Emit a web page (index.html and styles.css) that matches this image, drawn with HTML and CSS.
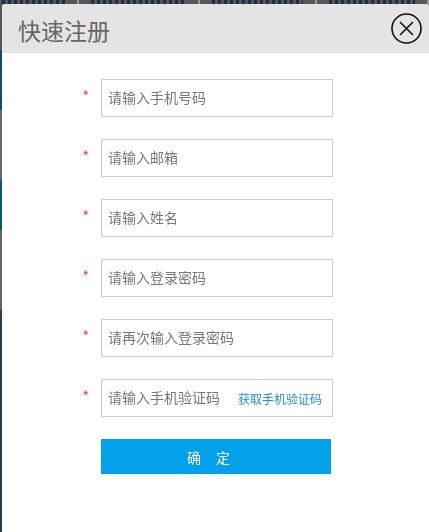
FILE: index.html
```html
<!DOCTYPE html>
<html lang="zh-CN">
<head>
  <meta charset="UTF-8" />
  <title>快速注册</title>
  <link rel="stylesheet" href="styles.css">
</head>
<body>

<div class="page">
  <div class="site-nav">
    <span class="nav-item w1"></span><span class="nav-sep"></span>
    <span class="nav-item w2"></span><span class="nav-sep"></span>
    <span class="nav-item w3"></span><span class="nav-sep"></span>
    <span class="nav-item w4"></span><span class="nav-sep"></span>
  </div>
</div>

<div class="dialog">
  <div class="dialog-head">
    <h2>快速注册</h2>
    <button class="close-btn" title="关闭">
      <svg width="31" height="31" viewBox="0 0 31 31">
        <circle cx="15.5" cy="15.5" r="14.5" fill="none" stroke="#111" stroke-width="1.6"/>
        <path d="M9 9 L22 22 M22 9 L9 22" stroke="#111" stroke-width="1.6" fill="none"/>
      </svg>
    </button>
  </div>

  <form class="reg-form" onsubmit="return false">
    <div class="form-row">
      <span class="req">*</span>
      <input type="text" class="field" placeholder="请输入手机号码">
    </div>
    <div class="form-row">
      <span class="req">*</span>
      <input type="text" class="field" placeholder="请输入邮箱">
    </div>
    <div class="form-row">
      <span class="req">*</span>
      <input type="text" class="field" placeholder="请输入姓名">
    </div>
    <div class="form-row">
      <span class="req">*</span>
      <input type="password" class="field" placeholder="请输入登录密码">
    </div>
    <div class="form-row">
      <span class="req">*</span>
      <input type="password" class="field" placeholder="请再次输入登录密码">
    </div>
    <div class="form-row">
      <span class="req">*</span>
      <div class="field code-box">
        <input type="text" placeholder="请输入手机验证码">
        <a href="#" class="get-code">获取手机验证码</a>
      </div>
    </div>
    <button type="submit" class="submit-btn">确定</button>
  </form>
</div>

</body>
</html>
```

FILE: styles.css
```css
html, body {
  height: 100%;
}

body {
  margin: 0;
  font-family: "Liberation Sans", "Noto Sans CJK SC", sans-serif;
  background: #4b535e;
  overflow: hidden;
}

/* page behind the dialog, dimmed */
.page {
  height: 100%;
  background: linear-gradient(to bottom, #575757 0, #575757 50px, #0d4b78 50px, #0d4b78 110px, #6a6a6a 110px, #6a6a6a 180px, #0b567a 180px, #0b567a 230px, #666 230px, #666 310px, #2e3d52 310px);
}

.site-nav {
  display: flex;
  align-items: flex-start;
  gap: 12px;
  padding-left: 2px;
  height: 6px;
  overflow: hidden;
}

.nav-item {
  height: 4px;
  background: repeating-linear-gradient(to right, #1b2c4a 0, #1b2c4a 3px, transparent 3px, transparent 6px);
}

.w1 { width: 66px; }
.w2 { width: 100px; }
.w3 { width: 96px; }
.w4 { width: 90px; }

.nav-sep {
  width: 2px;
  height: 4px;
  background: #9a9a9a;
}

/* dialog */
.dialog {
  position: fixed;
  left: 2px;
  top: 4px;
  right: 0;
  bottom: 0;
  background: #fff;
  border-radius: 3px 3px 0 0;
  overflow: hidden;
}

.dialog-head {
  height: 49px;
  background: #e4e4e4;
  display: flex;
  align-items: center;
  justify-content: space-between;
  padding: 0 7px 0 16px;
}

.dialog-head h2 {
  margin: 0;
  padding-top: 2px;
  font-size: 23px;
  font-weight: normal;
  color: #666;
}

.close-btn {
  border: none;
  background: none;
  padding: 0;
  width: 31px;
  height: 31px;
  cursor: pointer;
  display: block;
}

.close-btn svg {
  display: block;
}

.reg-form {
  padding: 26px 0 0 81px;
  display: flex;
  flex-direction: column;
  gap: 22px;
}

.form-row {
  display: flex;
  align-items: flex-start;
}

.req {
  width: 18px;
  padding-top: 9px;
  font-size: 14px;
  line-height: 14px;
  color: #f23030;
}

.field {
  width: 232px;
  height: 38px;
  box-sizing: border-box;
  border: 1px solid #ccc;
  padding: 0 6px;
  font-family: inherit;
  font-size: 14px;
  color: #333;
  outline: none;
}

.field::placeholder,
.code-box input::placeholder {
  color: #777;
}

.code-box {
  display: flex;
  align-items: center;
  padding-right: 10px;
}

.code-box input {
  flex: 1;
  min-width: 0;
  border: none;
  padding: 0;
  font-family: inherit;
  font-size: 14px;
  outline: none;
}

.get-code {
  font-size: 12px;
  color: #2190e3;
  text-decoration: none;
  white-space: nowrap;
}

.submit-btn {
  margin-left: 18px;
  width: 230px;
  height: 35px;
  border: none;
  background: #02a1e9;
  color: #fff;
  font-family: inherit;
  font-size: 14px;
  letter-spacing: 15px;
  padding: 0;
  cursor: pointer;
}
```
